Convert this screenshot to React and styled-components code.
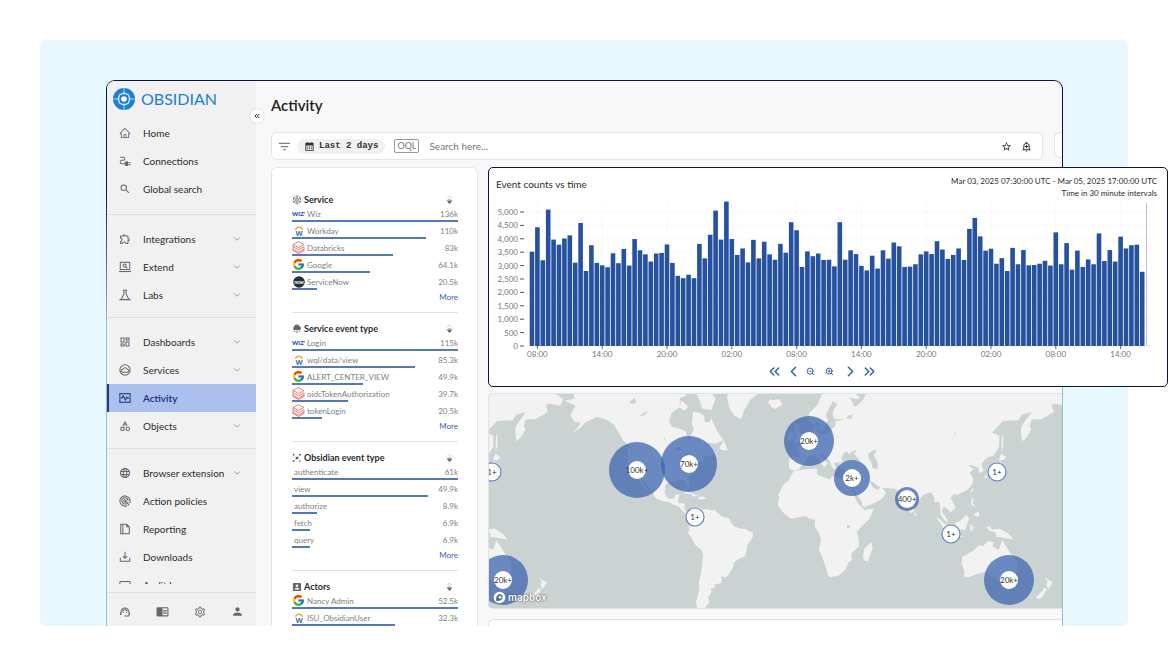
import React from 'react';
import styled, { createGlobalStyle, css } from 'styled-components';
import { AiOutlineHome, AiOutlineSetting } from 'react-icons/ai';
import {
  MdCalendarMonth,
  MdChromeReaderMode,
  MdFilterList,
  MdLanguage,
  MdOutlineAddAlert,
  MdOutlineCategory,
  MdOutlineDashboard,
  MdOutlineExtension,
  MdOutlineSupportAgent,
  MdPerson,
  MdSearch,
  MdStarOutline,
} from 'react-icons/md';
import { FcGoogle } from 'react-icons/fc';
import {
  ChevronDown,
  ChevronLeft,
  ChevronRight,
  ChevronsLeft,
  ChevronsRight,
  ZoomIn,
  ZoomOut,
} from 'lucide-react';

const NAVY = '#0b1440';
const BLUE = '#2551a0';

/* --- data --- */
const NAV_GROUPS = [
  [
    { label: 'Home', icon: 'home' },
    { label: 'Connections', icon: 'plug' },
    { label: 'Global search', icon: 'search' },
  ],
  [
    { label: 'Integrations', icon: 'puzzle', more: true },
    { label: 'Extend', icon: 'extend', more: true },
    { label: 'Labs', icon: 'labs', more: true },
  ],
  [
    { label: 'Dashboards', icon: 'dashboard', more: true },
    { label: 'Services', icon: 'cloud', more: true },
    { label: 'Activity', icon: 'activity', active: true },
    { label: 'Objects', icon: 'objects', more: true },
  ],
  [
    { label: 'Browser extension', icon: 'globe', more: true },
    { label: 'Action policies', icon: 'target' },
    { label: 'Reporting', icon: 'report' },
    { label: 'Downloads', icon: 'download' },
    { label: 'Audit logs', icon: 'log' },
  ],
];

const FACETS = [
  {
    title: 'Service',
    icon: 'cube',
    rows: [
      { logo: 'wiz', name: 'Wiz', count: '136k', pct: 100 },
      { logo: 'workday', name: 'Workday', count: '110k', pct: 81 },
      { logo: 'databricks', name: 'Databricks', count: '83k', pct: 61 },
      { logo: 'google', name: 'Google', count: '64.1k', pct: 47 },
      { logo: 'now', name: 'ServiceNow', count: '20.5k', pct: 15 },
    ],
  },
  {
    title: 'Service event type',
    icon: 'rain',
    rows: [
      { logo: 'wiz', name: 'Login', count: '115k', pct: 100 },
      { logo: 'workday', name: 'wql/data/view', count: '85.3k', pct: 74 },
      { logo: 'google', name: 'ALERT_CENTER_VIEW', count: '49.9k', pct: 43 },
      { logo: 'databricks', name: 'oidcTokenAuthorization', count: '39.7k', pct: 34 },
      { logo: 'databricks', name: 'tokenLogin', count: '20.5k', pct: 18 },
    ],
  },
  {
    title: 'Obsidian event type',
    icon: 'nodes',
    rows: [
      { name: 'authenticate', count: '61k', pct: 100 },
      { name: 'view', count: '49.9k', pct: 82 },
      { name: 'authorize', count: '8.9k', pct: 15 },
      { name: 'fetch', count: '6.9k', pct: 11 },
      { name: 'query', count: '6.9k', pct: 11 },
    ],
  },
  {
    title: 'Actors',
    icon: 'actor',
    rows: [
      { logo: 'google', name: 'Nancy Admin', count: '52.5k', pct: 100 },
      { logo: 'workday', name: 'ISU_ObsidianUser', count: '32.3k', pct: 62 },
    ],
  },
];

const COUNTS = [
  3520, 4430, 3200, 5090, 3970, 3780, 4010, 4130, 3110, 4590, 2800, 3760, 3100, 3010, 2940, 3460,
  3090, 3620, 3000, 3990, 3570, 3420, 3150, 3450, 3470, 3790, 3100, 2620, 2530, 2660, 2530, 3810,
  3270, 4150, 5050, 3970, 5390, 3990, 3400, 3640, 3120, 3960, 3270, 3890, 3420, 3220, 3810, 3480,
  4620, 4320, 2950, 3530, 3350, 3450, 3210, 3220, 2970, 4620, 3220, 3570, 3430, 2990, 2820, 3370,
  2890, 3570, 3260, 3860, 3720, 2950, 2960, 3050, 3420, 3530, 3430, 3910, 3600, 3250, 3400, 3640,
  3210, 4370, 4780, 4090, 3560, 3630, 3070, 3280, 2800, 3660, 3050, 3580, 3010, 3020, 3070, 3180,
  3000, 4240, 3050, 3840, 2850, 3560, 2950, 3230, 3050, 4200, 3170, 3580, 3150, 4080, 3640, 3760,
  3780, 2770,
];
const Y_TICKS = [0, 500, 1000, 1500, 2000, 2500, 3000, 3500, 4000, 4500, 5000];
const X_TICKS = ['08:00', '14:00', '20:00', '02:00', '08:00', '14:00', '20:00', '02:00', '08:00', '14:00'];

// coastlines as lon,lat pairs
const LAND = [
  '-168,66 -162,66.5 -163,69 -156,71.5 -141,70 -128,70.5 -115,69 -108,68 -95,68 -94,72 -85,70 -82,67.5 -87,66.5 -87,64 -93,62 -94.5,59 -92.5,57 -88,56.5 -82.5,55.2 -82,52.9 -79.5,51.3 -79,54 -77,56 -78.5,58.7 -77.5,62.4 -73.5,62.3 -69.5,61 -69.5,59 -66,58.7 -64.5,60.3 -61.8,57 -60,55 -57,52.5 -56,51.5 -60,50.2 -66.5,50.2 -69,48.5 -65,49 -64.5,47 -61,45.5 -66,43.6 -67,44.8 -70.5,43.2 -70,41.8 -74,40.5 -76,37 -75.5,35.2 -78,33.9 -81.2,31.5 -80,27 -80.4,25.3 -81.8,26 -82.8,28.5 -84,30 -88,30.3 -89.5,29.2 -94,29.6 -97.3,27.5 -97.7,22.5 -96,19 -94.5,18.2 -91,18.7 -90.4,21 -87,21.5 -88,18 -88.5,15.9 -83.3,15 -83.7,11 -82,9 -79.5,9.5 -77.3,8.5 -78,7.5 -80,7.4 -83,8.3 -85.8,10.5 -87.5,13 -92,14.5 -94.5,16.2 -99,16.7 -103.5,18.3 -105.5,20.3 -106,22.8 -109.4,26 -112.5,29.5 -114.7,31.7 -112.8,28 -109.5,23.1 -112,24.8 -114.5,27.5 -116,30.5 -117.2,32.8 -120.5,34.5 -123.8,39 -124.3,43 -124,48.3 -122.5,47.5 -123,49 -127.5,51.5 -130.5,54.8 -134,58 -139,59.7 -146,60.8 -151,59.5 -154,58.8 -158,56.5 -164,54.6 -160,56.5 -157.5,58.7 -162,59 -165,61.5 -161,64.4 -168,65.7',
  '-80,74 -68,70 -61.5,66.5 -64.5,63 -71,63.5 -73,66 -78,70 -88,73',
  '-86,66 -81,64 -84,62.8 -87,63.8',
  '-59,47.7 -55.5,51.5 -53,47 -56,46.8',
  '-84.8,22 -82,23.1 -77,21.5 -74.2,20.2 -77.7,19.9 -79,21.5',
  '-74.4,18.4 -73,19.9 -70,19.8 -68.4,18.6 -71,17.8',
  '-55,72 -51,69 -53.5,67 -51.5,63.5 -48,61 -43.5,59.9 -41,63 -37,66 -30,68.2 -22,70.5 -20,74',
  '-24,65.5 -22,64 -19,63.4 -14,64.8 -16,66.4 -21,66 -22.5,66.4',
  '-77.3,8.5 -75.5,10.7 -72,12.2 -71.3,10.9 -68,11.3 -64,10.2 -62,10.6 -60,8.5 -57,6 -52,4.8 -50,1 -48.5,-0.8 -44.5,-2.5 -40,-2.9 -37,-4.8 -35.2,-5.3 -34.8,-8 -37,-11.5 -39,-14 -39.2,-18 -41,-22 -44.5,-23.1 -48.5,-25.8 -48.8,-28.5 -52,-33 -54,-34.8 -57.8,-34.3 -57,-36.5 -58,-38.3 -62,-39 -62.3,-41 -65,-41 -64.3,-42.8 -67,-46 -65.8,-47.9 -69,-50.5 -68.5,-53 -74,-53 -75.5,-48 -73,-42 -73.5,-38 -71.5,-31 -70.3,-20 -72,-17 -76.3,-13.8 -79,-8.5 -81.3,-5.5 -80.3,-3.2 -80.8,-1.5 -79.5,1 -77.5,3.5 -77.5,7.5',
  '-9.3,38.7 -9,43.2 -1.8,43.4 -1.2,46 -4.6,48.3 -1.5,48.7 1.6,50.6 4.5,52.5 8.5,53.8 8.2,57 10.6,57.6 10.5,54.5 14,54 19,54.5 21,56 23.5,57.3 24,59.3 30,59.8 22.9,60.1 21.5,62 25,65 22,65.8 17.5,62 17,60.5 18.8,59.8 16.5,57.5 14.3,55.5 12.8,55.6 11.2,59 8,58 5.3,59.5 5,62 11,64.7 14.5,68 20,70 28,71 33,69.3 41,67 40,66.2 34,66.8 37.5,64 40,64.7 43.8,66.3 46,68.3 54,68.3 60,69 68,68.7 68,73 180,73 180,69 190,66.3 188,64.4 180,65 177.5,64.7 179.3,62.4 170.5,60 163.5,59.8 162,57.5 163.3,56 160,53 156.8,51 155.7,56 157,58 163.5,62.3 156.5,61.6 154,59.5 143,59.3 135.3,54.7 140.5,53.5 140.3,48.5 136,44 132,43.2 127.7,40 129.4,36 126.4,34.5 125,38 121.5,39 118,39.1 121,37.5 122.3,37 119.3,35 121.8,31.5 121.5,28.5 118,24.3 113.5,22.3 110,20.8 108.3,21.6 105.8,19 109,13 109,11.5 105,8.7 104.8,10.4 101,13 99.3,10 103.4,4 103.8,1.4 100.5,4.5 98.3,8.5 98.5,12.5 97.5,16.5 94.4,16 94,19.5 91.5,22.7 87,21.3 82,16.7 80,13.5 79.8,10.3 77.6,8.1 75,12.5 73,17 72.7,21 70.5,20.8 69,22.3 66.7,25 57.3,25.6 54,26.6 50.8,29 48,30 50,26.5 51.5,25.2 54,24.1 56.3,26.2 59.8,22.5 57.7,19 52,15.6 45,12.8 43,13 42.5,16.5 39,21 35,28 32.6,29.9 34.3,31.4 36,36.5 31,36.6 27.5,37 26.3,40 30,41.2 35,42 41.5,41.5 37,45 39,47.2 35,46 33.5,44.5 32.5,46.2 30.5,46 28,43.3 28.8,41.2 26,40.7 23,40.3 24,38 22.8,36.5 21,38.5 19.4,41.8 13.7,45.6 12.4,44.3 18.4,40.1 16.7,38.7 15.7,38 12,42 8.8,44.4 3.2,43.2 3,41.8 -0.3,39.3 -2,36.8 -5.5,36.1 -8.9,37',
  '-6,35.8 3,36.8 10.5,37.2 11,33.8 15.5,32.2 20,30.7 21.5,32.8 29,31 32.3,31.2 32.6,29.9 35.5,24 37.3,20 39.5,15.5 43,12 44.5,10.5 51.2,11.8 48,4.5 42,-1.5 39,-5 40.5,-10.5 40.5,-15 35,-20 35.5,-24 32.8,-26 31,-30 26.5,-33.8 20,-34.8 18.3,-33.5 17,-29 14.5,-22.5 11.8,-17 13.7,-11 12.2,-5.8 9,-1 9.5,3.8 6,4.3 2,6.3 -4,5.2 -8,4.5 -13,8.5 -16.7,13 -17.4,14.8 -16.2,19 -17,21 -13,27.8 -9.7,30',
  '49.3,-12 50.4,-16 47,-25 44,-24.5 43.5,-21.5 44.5,-16.5',
  '-5.5,50.2 1.3,51.2 1.7,52.7 -1.5,55 -2,57.6 -4,58.6 -6,57 -4.8,54.5 -3.2,53.8 -5,52',
  '-10,51.7 -6.3,52.2 -6,54.5 -8,55.2 -9.8,54',
  '131,34.2 135.5,33.6 140.5,35.3 142,39.5 141.3,41.4 139.8,39 137,37 133,35.5',
  '140,41.6 143.3,42 145.5,43.3 141.8,45.4',
  '130,33 131.8,33.2 131,31.2 130.2,31.5',
  '142,46 143.3,49.2 143.2,54 142.2,53.5 142,49',
  '120.2,23 121,25.2 121.9,25 120.9,22',
  '120.3,16 120.7,18.5 122.2,18.4 121.6,15 124,12.7 120.7,13.8',
  '122,7 125.4,9.7 126.4,7 125.4,5.8',
  '95.4,5.6 98.5,3.8 103.5,-1 106,-3.2 105.8,-5.8 102,-4',
  '105.3,-6.7 108.5,-6.7 114.3,-7.7 114.3,-8.7 108,-7.8',
  '109,1.5 113,3.2 117,7 119,5 117.7,1 116,-3.8 110.2,-2.9',
  '119.5,-5.4 119.8,0.5 124.8,1.5 120.5,0.5 121,-1 123.2,-1 121.5,-2 122.5,-5 120.8,-3',
  '131,-1 134,-1 135,-3.3 141,-2.6 147,-6 150.5,-10.5 147,-9.7 143,-9 138,-8.3 138,-5.5 133,-4',
  '79.8,9.5 81.8,7.5 80.5,6',
  '114,-22 122,-18 126,-14 129,-15 132,-11.3 136.7,-12.2 135.5,-15 140,-17.6 142.5,-10.8 145.3,-15 149,-20.5 153.2,-25.5 153,-31 150,-37.3 146.3,-39 141,-38.2 138,-35.5 137.6,-33 135.5,-34.8 131,-31.5 124,-33 118,-35 115,-34.3 115.7,-31.7 113.5,-26',
  '144.8,-40.8 148.3,-41 147,-43.5',
  '172.8,-34.5 175.5,-36.5 178.5,-37.7 175.3,-41.5 173.8,-39.3 174.8,-37.5',
  '172.7,-40.6 174.2,-41.8 170.5,-46 168,-46.5 166.5,-45.8 171,-42.5',
];
const LAKES = [
  '51,47 53,46.5 51,44.5 53,42 54,39 53.8,36.9 50.3,37.4 49.3,40.5 47.5,43 47.2,45',
  '-92,46.7 -88,48.8 -84.7,46.6',
  '-87.8,42 -86.5,45.8 -86.2,42.5',
  '-84,45.8 -80,45 -82.4,43',
  '-123,65.5 -119,66.7 -118,65.3 -121,64.9',
  '-116,61 -110,62.8 -112,61.2',
  '-98.5,53.5 -97,51.5 -96.5,50.5 -98,52',
  '104,51.5 109,54 109.8,55.7 107.5,53.2',
  '32,0 34,0 33.5,-2.4 32,-2.3',
  '35,60 36,61.5 33,61.2 31.5,60.3',
];

const MARKERS = [
  { x: 148, y: 76, r: 28, label: '100k+' },
  { x: 200, y: 70, r: 28, label: '70k+' },
  { x: 320, y: 47, r: 25, label: '20k+' },
  { x: 363, y: 84, r: 18, label: '2k+' },
  { x: 418, y: 105, r: 12, label: '400+' },
  { x: 520, y: 186, r: 25, label: '20k+' },
  { x: 14, y: 186, r: 25, label: '20k+' },
  { x: 3, y: 78, r: 9, label: '1+' },
  { x: 206, y: 123, r: 9, label: '1+' },
  { x: 462, y: 140, r: 9, label: '1+' },
  { x: 508, y: 78, r: 9, label: '1+' },
];

const DEG = 1.405;
const toPath = (ring) =>
  `M${ring
    .split(' ')
    .map((pair) => {
      const [lon, lat] = pair.split(',').map(Number);
      const y = 131 - 80.5 * Math.asinh(Math.tan((lat * Math.PI) / 180));
      return `${(313 + lon * DEG).toFixed(1)} ${y.toFixed(1)}`;
    })
    .join('L')}Z`;

export default function App() {
  return (
    <>
      <GlobalStyle />
      <Page>
        <Stage>
          <Window>
            <Sidebar />
            <Main>
              <PageTitle>Activity</PageTitle>
              <SearchRow />
              <Columns>
                <FacetPanel />
                <Content>
                  <ChartPanel />
                  <MapPanel />
                  <NextCard />
                </Content>
              </Columns>
            </Main>
          </Window>
        </Stage>
      </Page>
    </>
  );
}

/* --- sections --- */
function Sidebar() {
  return (
    <Aside>
      <Brand href="#">
        <BrandMark />
        OBSIDIAN
      </Brand>
      <Collapse aria-label="Collapse sidebar">
        <ChevronsLeft size={8} strokeWidth={3} />
      </Collapse>
      <Nav>
        {NAV_GROUPS.map((group, i) => (
          <NavGroup key={i}>
            {group.map(({ label, icon, more, active }) => (
              <NavItem key={label} href="#" $active={active}>
                <NavIcon name={icon} />
                <NavLabel>{label}</NavLabel>
                {more && <ChevronDown size={10} color="#888" />}
              </NavItem>
            ))}
          </NavGroup>
        ))}
      </Nav>
      <NavFooter>
        <IconButton aria-label="Support">
          <MdOutlineSupportAgent size={12} />
        </IconButton>
        <IconButton aria-label="Documentation">
          <MdChromeReaderMode size={13} />
        </IconButton>
        <IconButton aria-label="Settings">
          <AiOutlineSetting size={12} />
        </IconButton>
        <IconButton aria-label="Account">
          <MdPerson size={13} />
        </IconButton>
      </NavFooter>
    </Aside>
  );
}

function SearchRow() {
  return (
    <Toolbar>
      <SearchBar>
        <IconButton aria-label="Filters">
          <MdFilterList size={15} color="#78838c" />
        </IconButton>
        <RangePill>
          <MdCalendarMonth size={11} />
          Last 2 days
        </RangePill>
        <OqlButton>OQL</OqlButton>
        <SearchInput aria-label="Search" placeholder="Search here..." />
        <IconButton aria-label="Save search">
          <MdStarOutline size={11} />
        </IconButton>
        <IconButton aria-label="Add alert">
          <MdOutlineAddAlert size={11} />
        </IconButton>
      </SearchBar>
      <ToolbarStub />
    </Toolbar>
  );
}

function FacetPanel() {
  return (
    <Facets>
      {FACETS.map(({ title, icon, rows }) => (
        <Facet key={title}>
          <FacetHead>
            <FacetIcon name={icon} />
            <FacetTitle>{title}</FacetTitle>
            <SortButton aria-label={`Sort ${title}`}>
              <svg width="7" height="10" viewBox="0 0 7 10">
                <path d="M1 3.5 3.5 1 6 3.5" fill="none" stroke="#bbb" strokeWidth=".7" />
                <path d="M2 4.5h3" stroke="#aaa" strokeWidth=".7" />
                <path d="M.5 5.5h6L3.5 9Z" fill="#666" />
              </svg>
            </SortButton>
          </FacetHead>
          <FacetList>
            {rows.map((row) => (
              <FacetRow key={row.name}>
                <FacetLine $plain={!row.logo}>
                  {row.logo && (
                    <LogoSlot>
                      <Logo name={row.logo} />
                    </LogoSlot>
                  )}
                  <span>{row.name}</span>
                  <Count>{row.count}</Count>
                </FacetLine>
                <Meter style={{ width: `${row.pct}%` }} />
              </FacetRow>
            ))}
          </FacetList>
          <More href="#">More</More>
        </Facet>
      ))}
    </Facets>
  );
}

function ChartPanel() {
  const base = 147;
  const step = 5.4;
  return (
    <ChartCard>
      <ChartHead>
        <ChartTitle>Event counts vs time</ChartTitle>
        <ChartRange>
          Mar 03, 2025 07:30:00 UTC - Mar 05, 2025 17:00:00 UTC
          <br />
          Time in 30 minute intervals
        </ChartRange>
      </ChartHead>
      <Chart viewBox="0 0 661 164" role="img" aria-label="Event counts vs time">
        {Y_TICKS.map((t) => {
          const y = base - t * 0.0268;
          return (
            <g key={t}>
              <path d={`M30 ${y}H654`} stroke="#f5f5f5" strokeDasharray="2 1" />
              <path d={`M24 ${y}h4`} stroke="#555" />
              <text x="22" y={y + 3} textAnchor="end">
                {t.toLocaleString('en-US')}
              </text>
            </g>
          );
        })}
        {X_TICKS.map((t, i) => {
          const x = 36 + step * (1 + i * 12);
          return (
            <g key={i}>
              <path d={`M${x} 4V${base}`} stroke="#f5f5f5" strokeDasharray="2 1" />
              <path d={`M${x} ${base}v3`} stroke="#666" />
              <text x={x} y="158" textAnchor="middle">
                {t}
              </text>
            </g>
          );
        })}
        {COUNTS.map((c, i) => (
          <rect
            key={i}
            x={36 + step * i - 2.3}
            y={base - c * 0.0268}
            width="4.6"
            height={c * 0.0268}
            fill={BLUE}
          />
        ))}
        <path d={`M650.5 4V${base}`} stroke="#c4c4c4" />
        <path d={`M650 ${base - 0.5}h4`} stroke="#ddd" />
      </Chart>
      <Pager>
        <IconButton aria-label="First">
          <ChevronsLeft size={17} />
        </IconButton>
        <IconButton aria-label="Previous">
          <ChevronLeft size={17} />
        </IconButton>
        <IconButton aria-label="Zoom out">
          <ZoomOut size={9} strokeWidth={2.5} />
        </IconButton>
        <IconButton aria-label="Zoom in">
          <ZoomIn size={9} strokeWidth={2.5} />
        </IconButton>
        <IconButton aria-label="Next">
          <ChevronRight size={17} />
        </IconButton>
        <IconButton aria-label="Last">
          <ChevronsRight size={17} />
        </IconButton>
      </Pager>
    </ChartCard>
  );
}

function MapPanel() {
  const world = (
    <>
      <path d={LAND.map(toPath).join('')} fill="#f1f2f1" />
      <path d={LAKES.map(toPath).join('')} fill="#cbd2d2" />
    </>
  );
  return (
    <MapCard>
      <MapSvg viewBox="0 0 573 214" role="img" aria-label="Events by location">
        <g>{world}</g>
        <g transform={`translate(${-360 * DEG} 0)`}>{world}</g>
        {MARKERS.map(({ x, y, r, label }) => (
          <g key={`${x}-${y}`}>
            {r > 9 && <circle cx={x} cy={y} r={r} fill="#3b64b0" fillOpacity=".74" />}
            <circle
              cx={x}
              cy={y}
              r={9}
              fill="#fff"
              stroke={r > 9 ? 'none' : '#6482c0'}
              strokeWidth="1.2"
            />
            <text x={x} y={y + 3} textAnchor="middle">
              {label}
            </text>
          </g>
        ))}
      </MapSvg>
      <MapCredit href="#">
        <svg width="13" height="13" viewBox="0 0 13 13">
          <circle cx="6.5" cy="6.5" r="5.8" fill="#fff" />
          <path d="M3.2 9.8C2.7 6.5 4 3 7 2.9a3.3 3.3 0 0 1 .6 6.3c-1.2.7-2.8.8-4.4.6Z" fill="#4c6797" />
          <path d="m7 3.9.7 1.6 1.6.7-1.6.7L7 8.5l-.7-1.6-1.6-.7 1.6-.7Z" fill="#fff" />
        </svg>
        mapbox
      </MapCredit>
    </MapCard>
  );
}

/* --- icons --- */
function NavIcon({ name }) {
  const lib = {
    home: AiOutlineHome,
    search: MdSearch,
    puzzle: MdOutlineExtension,
    dashboard: MdOutlineDashboard,
    objects: MdOutlineCategory,
    globe: MdLanguage,
  }[name];
  if (lib) return React.createElement(lib, { size: 12 });
  const shapes = {
    plug: (
      <>
        <path d="M1.5 2.5H5a1.8 1.8 0 0 1 0 3.6H3.5a2 2 0 0 0 0 4.1H6" />
        <path d="M10 8H9a2 2 0 0 0 0 4.2h1Z" fill="currentColor" />
        <path d="M11 9h2.5M11 11.3h2.5" />
      </>
    ),
    extend: (
      <>
        <rect x="1.5" y="1.5" width="11" height="8.5" />
        <path d="M0 12.3h14" />
        <circle cx="6.5" cy="5.3" r="1.8" />
        <path d="m8 6.8 1.7 1.7" />
      </>
    ),
    labs: <path d="M4.5 1.5h5M5.7 1.5V6L2.5 12M8.3 1.5V6l3.2 6M.5 12.4h13" />,
    cloud: (
      <>
        <circle cx="7" cy="7" r="6" />
        <path d="M4.5 9.5a1.7 1.7 0 0 1 0-3.4 2.7 2.7 0 0 1 5 0 1.7 1.7 0 0 1 0 3.4Z" />
      </>
    ),
    activity: (
      <>
        <path d="M1 5.5V2h12v3.5M1 8.5V12h12V8.5" />
        <path d="M0 7h3.5L5 4.5l2.5 5L9 6l.7 1H14" />
      </>
    ),
    target: (
      <>
        <path d="M9.5 12.5a6 6 0 1 1 3-3" />
        <path d="M9 10a3.7 3.7 0 1 1 1.7-3" />
        <circle cx="7" cy="7" r="1.4" />
        <path d="m7 7 5 5M10.5 8.5V11" />
      </>
    ),
    report: <path d="M2 1.5h7l3 3v8H2ZM9 1.5v3h3M4.5 1.5v11" />,
    download: <path d="M7 1v7.5M4.5 6 7 8.5 9.5 6M1.5 8v4h11V8" />,
    log: <rect x="1" y="3" width="12" height="9" rx="1" />,
  };
  return (
    <svg width="12" height="12" viewBox="0 0 14 14" fill="none" stroke="currentColor" strokeWidth="1.2">
      {shapes[name]}
    </svg>
  );
}

function FacetIcon({ name }) {
  const shapes = {
    cube: (
      <g fill="none" stroke="#777">
        <path d="m5.5 1 3.9 2.2v4.5L5.5 10 1.6 7.7V3.2Z" strokeDasharray="2 .5" />
        <circle cx="5.5" cy="5.5" r="1.5" />
        <path d="M5.5 1v3M5.5 7v3M1.6 3.2l2.5 1.5M9.4 3.2 6.9 4.7M1.6 7.7l2.5-1.4M9.4 7.7 6.9 6.3" />
      </g>
    ),
    rain: (
      <g fill="#666">
        <path d="M2.5 6.5A2 2 0 0 1 2.2 3a3.3 3.3 0 0 1 6.3-.2 1.9 1.9 0 0 1 0 3.7Z" />
        <path d="M2.5 7.2h1v1.5h-1ZM5 7.2h1V10H5ZM7.5 7.2h1v1.5h-1Z" />
      </g>
    ),
    nodes: (
      <g fill="#555">
        <path d="m2 2 3.5 3.5L9 2M5.5 5.5 2 9M5.5 5.5 9 9" stroke="#aaa" strokeWidth=".6" fill="none" />
        <circle cx="5.5" cy="5.5" r="1.5" />
        <circle cx="1.7" cy="1.8" r=".9" />
        <circle cx="9" cy="1.8" r="1" />
        <circle cx="1.7" cy="9" r="1" />
        <circle cx="8.7" cy="9" r=".8" />
      </g>
    ),
    actor: (
      <g>
        <rect x="1" y="1" width="9" height="9" rx="1" fill="#666" />
        <circle cx="5.5" cy="4.2" r="1.4" fill="#fff" />
        <path d="M2.8 8.3a2.7 1.9 0 0 1 5.4 0Z" fill="#fff" />
      </g>
    ),
  };
  return (
    <svg width="10" height="10" viewBox="0 0 11 11">
      {shapes[name]}
    </svg>
  );
}

function Logo({ name }) {
  if (name === 'wiz') return <WizMark>WIZ&apos;</WizMark>;
  if (name === 'google') return <FcGoogle size={13} />;
  if (name === 'workday') {
    return (
      <svg width="12" height="12" viewBox="0 0 12 12">
        <path d="M2.5 5a3.6 3.6 0 0 1 7 0" fill="none" stroke="#f6a92d" strokeWidth="1.3" />
        <text x="6" y="10.5" textAnchor="middle" fontSize="9" fontWeight="700" fill="#1f69b8">
          w
        </text>
      </svg>
    );
  }
  if (name === 'databricks') {
    return (
      <svg width="13" height="13" viewBox="0 0 13 13" fill="none" stroke="#ef5b4c" strokeWidth=".8">
        <path d="m1 3.5 5.5-3 5.5 3-5.5 3ZM1 3.5v2.3l5.5 3 5.5-3M1 5.8v2.4l5.5 3 5.5-3V6M1 8v1.5l5.5 3 5.5-3V8" />
      </svg>
    );
  }
  return (
    <svg width="12" height="12" viewBox="0 0 12 12">
      <circle cx="6" cy="6" r="5.8" fill="#213338" />
      <text x="6" y="7.5" textAnchor="middle" fontSize="5" fontWeight="700" fill="#fff">
        now
      </text>
    </svg>
  );
}

const BrandMark = () => (
  <svg width="22" height="22" viewBox="0 0 22 22">
    <circle cx="11" cy="11" r="11" fill="#1b7fd8" />
    <g fill="none" stroke="#e9f4fc">
      <path d="m11 5 4.2 1.8L17 11l-1.8 4.2L11 17l-4.2-1.8L5 11l1.8-4.2Z" strokeWidth="1.2" />
      <path d="M11 0v7M11 15v7M0 11h7M15 11h7" strokeWidth=".7" />
    </g>
    <circle cx="11" cy="11" r="2.8" fill="#fff" />
  </svg>
);

/* --- styles --- */
const GlobalStyle = createGlobalStyle`
  *, *::before, *::after {
    box-sizing: border-box;
  }
  body {
    margin: 0;
    background: #fff;
    overflow: hidden;
    font-family: Lato, 'Open Sans', sans-serif;
    color: #2b2b2b;
  }
  button, input {
    font: inherit;
    color: inherit;
    border: 0;
    padding: 0;
    background: none;
  }
  a {
    color: inherit;
    text-decoration: none;
  }
  svg {
    flex: none;
  }
`;

const Page = styled.div`
  padding: 40px;
`;

const Stage = styled.div`
  height: calc(100vh - 80px);
  min-height: 400px;
  padding: 40px 65px 0 66px;
  border-radius: 6px;
  background: #e7f9ff;
`;

const Window = styled.div`
  display: flex;
  height: 100%;
  border: 1px solid transparent;
  border-bottom: 0;
  border-radius: 9px 9px 0 0;
  background: linear-gradient(#f8f8f8, #f8f8f8) padding-box,
    linear-gradient(${NAVY} 20%, #9fbccb 45%) border-box;
  overflow-x: visible;
  overflow-y: clip;
`;

const Aside = styled.aside`
  position: relative;
  display: flex;
  flex-direction: column;
  flex: none;
  width: 149px;
  background: #f1f1f1;
  border-radius: 8px 0 0 0;
`;

const Brand = styled.a`
  display: flex;
  align-items: center;
  gap: 6px;
  height: 38px;
  padding: 0 0 3px 6px;
  font-size: 16px;
  color: #1b7fd8;
`;

const Collapse = styled.button`
  position: absolute;
  top: 28px;
  right: -8px;
  display: grid;
  place-items: center;
  width: 14px;
  height: 14px;
  border-radius: 50%;
  background: #fff;
  box-shadow: 0 0 2px rgba(0, 0, 0, 0.2);
`;

const Nav = styled.nav`
  flex: 1;
  min-height: 0;
  overflow: hidden;
`;

const NavGroup = styled.div`
  padding: 10px 0 8px;
  border-bottom: 1px solid #dfe0e0;

  &:first-child {
    padding: 0 0 11px;
  }
`;

const NavItem = styled.a`
  display: flex;
  align-items: center;
  gap: 12px;
  height: 28px;
  padding: 0 14px 0 12px;
  font-size: 10px;
  color: #2c2c2c;

  > svg:first-child {
    color: #666;
  }

  ${({ $active }) =>
    $active &&
    css`
      background: #abc0ee;
      box-shadow: inset 2px 0 #1d3f7e;
      color: #14306b;
      font-weight: 600;

      > svg:first-child {
        color: #14306b;
      }
    `}
`;

const NavLabel = styled.span`
  flex: 1;
  min-width: 0;
  white-space: nowrap;
`;

const NavFooter = styled.div`
  display: flex;
  justify-content: space-between;
  align-items: center;
  height: 34px;
  margin-top: 8px;
  padding: 4px 12px 0;
  border-top: 1px solid #e0e0e0;
  color: #666;
`;

const IconButton = styled.button`
  display: grid;
  place-items: center;
`;

const Main = styled.main`
  flex: 1;
  min-width: 0;
  padding-left: 15px;
`;

const PageTitle = styled.h1`
  margin: 0;
  padding: 14px 0 17px;
  font-size: 15px;
  line-height: 20px;
  font-weight: 600;
  color: #222;
`;

const Toolbar = styled.div`
  display: flex;
  gap: 11px;
`;

const SearchBar = styled.div`
  flex: 1;
  display: flex;
  align-items: center;
  gap: 9px;
  height: 28px;
  padding: 0 10px 0 5px;
  border: 1px solid #e4e4e4;
  border-radius: 6px;
  background: #fff;
  color: #333;
`;

const RangePill = styled.button`
  display: flex;
  align-items: center;
  gap: 4px;
  height: 15px;
  margin-left: -4px;
  padding: 0 7px;
  border-radius: 8px;
  background: #f0f0f0;
  font: 700 9px 'Liberation Mono', monospace;
`;

const OqlButton = styled.button`
  height: 14px;
  padding: 0 2px;
  border: 1px solid #999;
  border-radius: 2px;
  font-size: 9px;
  line-height: 12px;
  color: #777;
`;

const SearchInput = styled.input`
  flex: 1;
  min-width: 0;
  padding-left: 1px;
  font-size: 10px;
  outline: none;

  &::placeholder {
    color: #777;
  }
`;

const ToolbarStub = styled.div`
  width: 8px;
  height: 26px;
  border: 1px solid #e4e4e4;
  border-right: 0;
  border-radius: 6px 0 0 6px;
  background: #fff;
`;

const Columns = styled.div`
  display: flex;
  gap: 10px;
  padding-top: 7px;
`;

const Facets = styled.section`
  flex: none;
  width: 207px;
  padding: 25px 19px 25px 20px;
  border: 1px solid #e6e6e6;
  border-radius: 6px;
  background: #fff;
`;

const Facet = styled.div`
  display: flex;
  flex-direction: column;
  margin-bottom: 9px;
  padding-bottom: 8px;
  border-bottom: 1px solid #e2e2e2;
`;

const FacetHead = styled.div`
  display: flex;
  align-items: center;
  gap: 2px;
  height: 14px;
`;

const FacetTitle = styled.h2`
  flex: 1;
  margin: 0;
  font-size: 9px;
  line-height: 14px;
  font-weight: 700;
`;

const SortButton = styled.button`
  display: grid;
  padding-right: 5px;
`;

const FacetList = styled.div`
  display: grid;
  gap: 2px;
`;

const FacetRow = styled.div`
  height: 15px;
`;

const FacetLine = styled.div`
  display: flex;
  align-items: center;
  gap: 2px;
  height: 13px;
  padding-left: ${({ $plain }) => ($plain ? '2px' : '0')};
  font-size: 8px;
  color: #808080;
`;

const LogoSlot = styled.span`
  display: grid;
  place-items: center;
  width: 13px;
`;

const WizMark = styled.span`
  font-size: 6px;
  font-weight: 900;
  color: #1746d8;
`;

const Count = styled.span`
  margin-left: auto;
`;

const Meter = styled.div`
  height: 2px;
  background: #5578bd;
`;

const More = styled.a`
  align-self: flex-end;
  font-size: 8px;
  line-height: 14px;
  color: #3a62b0;
`;

const Content = styled.div`
  flex: 1;
  min-width: 0;
  display: flex;
  flex-direction: column;
  gap: 6px;
`;

// the chart card hangs over the window's right edge
const ChartCard = styled.section`
  position: relative;
  margin-right: -106px;
  padding: 7px 10px 7px 7px;
  border: 1px solid ${NAVY};
  border-radius: 5px;
  background: #fff;
`;

const ChartHead = styled.div`
  display: flex;
  justify-content: space-between;
  height: 24px;
`;

const ChartTitle = styled.h2`
  margin: 0;
  font-size: 10px;
  line-height: 18px;
  font-weight: 400;
`;

const ChartRange = styled.p`
  margin: 0;
  font-size: 8px;
  line-height: 12px;
  text-align: right;
`;

const Chart = styled.svg`
  display: block;
  width: 100%;
  font-size: 8px;

  text {
    fill: #777;
  }
`;

const Pager = styled.div`
  display: flex;
  justify-content: center;
  gap: 6px;
  height: 16px;
  padding-right: 14px;
  color: #2f5aa8;

  > button {
    width: 13px;
  }
`;

const MapCard = styled.section`
  position: relative;
  border: 1px solid #dfe3e3;
  border-right: 0;
  border-radius: 5px 0 0 5px;
  background: #cbd2d2;
  overflow: hidden;
`;

const MapSvg = styled.svg`
  display: block;
  width: 100%;
  font-size: 8px;

  text {
    fill: #333;
  }
`;

const MapCredit = styled.a`
  position: absolute;
  left: 4px;
  bottom: 4px;
  display: flex;
  align-items: center;
  gap: 2px;
  font: 600 10px/14px Inter, sans-serif;
  color: #fff;
  text-shadow: 0 0 1px #555, 0 0 2px #555;
`;

const NextCard = styled.section`
  height: 60px;
  margin-top: 4px;
  border: 1px solid #e0e0e0;
  border-right: 0;
  border-radius: 6px 0 0 0;
  background: #fff;
`;
